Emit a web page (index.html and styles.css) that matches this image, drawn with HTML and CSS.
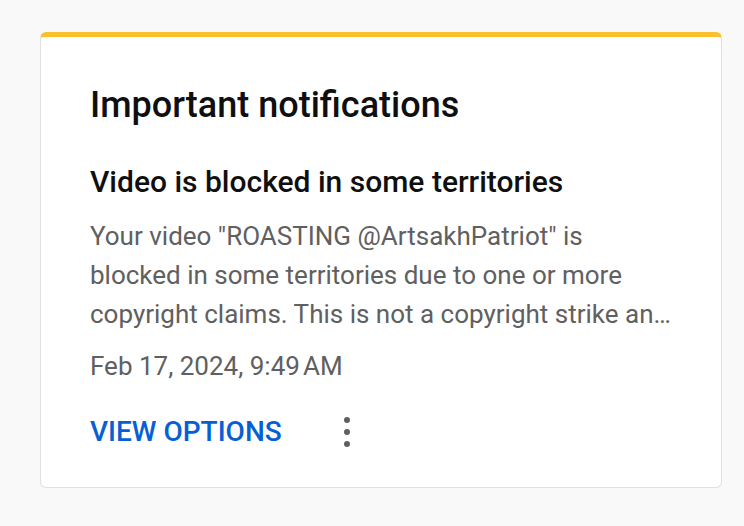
FILE: index.html
```html
<!DOCTYPE html>
<html>
<head>
<meta charset="utf-8">
<link rel="stylesheet" href="styles.css">
</head>
<body>
<div class="card">
  <h1 class="title">Important notifications</h1>
  <h2 class="subtitle">Video is blocked in some territories</h2>
  <p class="desc">Your video "ROASTING @ArtsakhPatriot" is blocked in some territories due to one or more copyright claims. This is not a copyright strike and does not affect your account standing.</p>
  <div class="date">Feb 17, 2024, 9:49&#8239;AM</div>
  <div class="actions">
    <span class="btn">VIEW OPTIONS</span>
    <span class="more"><i></i><i></i><i></i></span>
  </div>
</div>
</body>
</html>
```
FILE: styles.css
```css
html, body { margin: 0; padding: 0; }
body {
  background: #f9f9f9;
  font-family: Roboto, "Noto Sans", sans-serif;
  padding: 32px 22px 0 40px;
}
.card {
  width: 682px;
  box-sizing: border-box;
  background: #fff;
  border: 1px solid #e0e0e0;
  border-top: 5px solid #fbc02d;
  border-radius: 6px;
  padding: 46px 50px 37px 49px;
}
.title {
  margin: 0;
  font-size: 36px;
  font-weight: 500;
  color: #0f0f0f;
  line-height: 44px;
}
.subtitle {
  margin: 36px 0 0;
  font-size: 30px;
  font-weight: 500;
  color: #0f0f0f;
  line-height: 38px;
}
.desc {
  margin: 16px 0 0;
  font-size: 26px;
  color: #606060;
  line-height: 39px;
  display: -webkit-box;
  -webkit-line-clamp: 3;
  -webkit-box-orient: vertical;
  overflow: hidden;
}
.date {
  margin-top: 14px;
  font-size: 26px;
  color: #606060;
  line-height: 36px;
}
.actions {
  display: flex;
  align-items: center;
  margin-top: 30px;
  height: 36px;
}
.btn {
  font-size: 28px;
  font-weight: 500;
  color: #065fd4;
  line-height: 36px;
}
.more {
  margin-left: 62px;
  display: flex;
  flex-direction: column;
  gap: 6px;
}
.more i {
  display: block;
  width: 6px;
  height: 6px;
  border-radius: 50%;
  background: #606060;
}
```
